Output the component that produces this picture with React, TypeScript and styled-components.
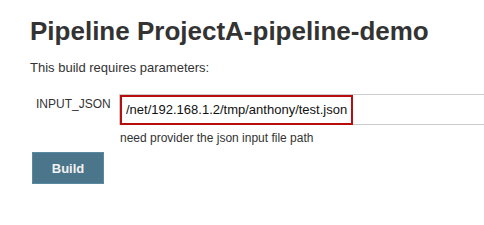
import styled, { createGlobalStyle } from "styled-components"

const GlobalStyle = createGlobalStyle`
    html, body {
        margin: 0;
        padding: 0;
        background: #ffffff;
    }
    body {
        font-family: "Liberation Sans", Arial, sans-serif;
        color: #333333;
    }
`

export default function App() {
    return (
        <>
            <GlobalStyle />
            <Page>
                <Title>Pipeline ProjectA-pipeline-demo</Title>
                <Intro>This build requires parameters:</Intro>

                <ParamRow>
                    <ParamLabel htmlFor="input-json">INPUT_JSON</ParamLabel>
                    <ParamField>
                        <InputWrap>
                            <TextInput
                                id="input-json"
                                name="INPUT_JSON"
                                defaultValue="/net/192.168.1.2/tmp/anthony/test.json"
                            />
                            <Highlight />
                        </InputWrap>
                        <HelpText>need provider the json input file path</HelpText>
                    </ParamField>
                </ParamRow>

                <BuildButton>Build</BuildButton>
            </Page>
        </>
    )
}

const Page = styled.div`
    display: flex;
    flex-direction: column;
    align-items: flex-start;
    padding: 16px 0 0 30px;
`

const Title = styled.h1`
    margin: 0;
    font-size: 26px;
    line-height: 30px;
    font-weight: bold;
    color: #333333;
    white-space: nowrap;
`

const Intro = styled.p`
    margin: 14px 0 0;
    font-size: 13px;
    line-height: 16px;
    color: #333333;
`

const ParamRow = styled.div`
    display: flex;
    flex-direction: row;
    align-self: stretch;
    margin-top: 18px;
`

const ParamLabel = styled.label`
    flex: none;
    width: 83px;
    padding: 3px 0 0 6px;
    font-size: 12px;
    line-height: 14px;
    color: #333333;
    white-space: nowrap;
`

const ParamField = styled.div`
    display: flex;
    flex-direction: column;
    flex: 1;
    min-width: 0;
`

const InputWrap = styled.div`
    position: relative;
`

const TextInput = styled.input`
    box-sizing: border-box;
    width: 100%;
    height: 31px;
    padding: 0 6px;
    border: 1px solid #cccccc;
    border-right: none;
    border-radius: 0;
    font-family: "Liberation Sans", Arial, sans-serif;
    font-size: 13px;
    color: #111111;
    background: #ffffff;
    outline: none;
`

const Highlight = styled.div`
    position: absolute;
    left: 1px;
    top: 1px;
    width: 233px;
    height: 30px;
    box-sizing: border-box;
    border: 2px solid #b80d0d;
    pointer-events: none;
`

const HelpText = styled.div`
    margin: 6px 0 0 1px;
    font-size: 12px;
    line-height: 14px;
    color: #333333;
    white-space: nowrap;
`

const BuildButton = styled.button`
    margin: 7px 0 0 2px;
    width: 72px;
    height: 32px;
    box-sizing: border-box;
    border: 1px solid #5a8aa1;
    border-radius: 0;
    background: #4b758b;
    color: #f2f2f2;
    font-family: "Liberation Sans", Arial, sans-serif;
    font-size: 13px;
    font-weight: bold;
    cursor: pointer;
`
